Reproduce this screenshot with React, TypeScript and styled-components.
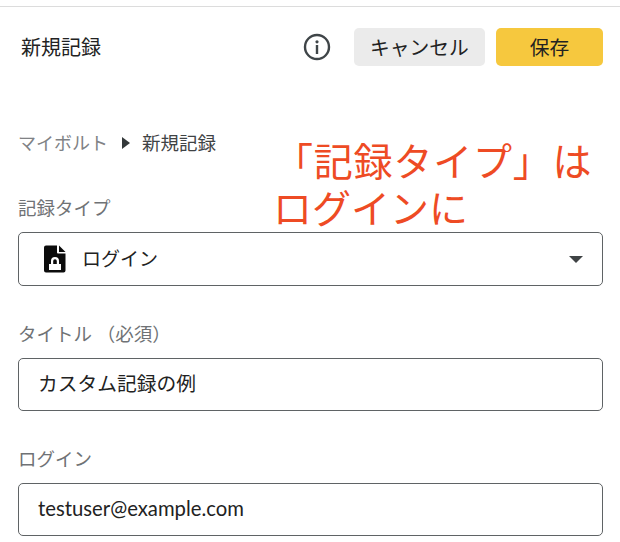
import React from 'react';
import styled, { createGlobalStyle } from 'styled-components';

const GlobalStyle = createGlobalStyle`
    html, body {
        margin: 0;
        background: #fff;
        overflow: hidden;
    }
    * {
        box-sizing: border-box;
    }
`;

const Page = styled.div`
    position: relative;
    width: 620px;
    height: 542px;
    overflow: hidden;
    padding-top: 6px;
    font-family: Lato, "Noto Sans CJK JP", sans-serif;
    color: #222;
`;

const TopLine = styled.div`
    height: 1px;
    background: #dcdcdc;
`;

const Toolbar = styled.header`
    display: flex;
    align-items: center;
    height: 38px;
    margin-top: 21px;
    padding: 0 17px 0 21px;
`;

const Title = styled.h1`
    flex: 1;
    margin: 0;
    font-size: 20px;
    font-weight: 400;
    line-height: 38px;
`;

const InfoButton = styled.span`
    display: flex;
    width: 28px;
    height: 28px;
    margin-right: 23px;
`;

const ActionButton = styled.button<{ $primary?: boolean; $width: number }>`
    width: ${(p) => p.$width}px;
    height: 38px;
    margin-left: ${(p) => (p.$primary ? 11 : 0)}px;
    padding: 0 0 2px;
    border: none;
    border-radius: 5px;
    background: ${(p) => (p.$primary ? '#f6c83e' : '#ebebeb')};
    color: #222;
    font-family: inherit;
    font-size: 19.750px;
`;

const Content = styled.main`
    padding: 0 17px 0 18px;
`;

const Breadcrumb = styled.nav`
    display: flex;
    align-items: center;
    height: 28px;
    margin-top: 62px;
    font-size: 18px;
`;

const CrumbLink = styled.span`
    color: #808285;
`;

const CrumbCurrent = styled.span`
    color: #3f4345;
    font-size: 18.500px;
`;

const CrumbArrow = styled.span`
    width: 0;
    height: 0;
    margin: 2px 12px 0 14px;
    border-top: 6px solid transparent;
    border-bottom: 6px solid transparent;
    border-left: 8px solid #33383a;
`;

const Field = styled.div<{ $gap: number }>`
    margin-top: ${(p) => p.$gap}px;
`;

const Label = styled.label`
    display: block;
    height: 26px;
    color: #6f7275;
    font-size: 18.500px;
    line-height: 26px;
`;

const Box = styled.div<{ $height: number; $inset: number }>`
    display: flex;
    align-items: center;
    height: ${(p) => p.$height}px;
    margin-top: 11px;
    padding: 0 19px 0 ${(p) => p.$inset}px;
    border: 1px solid #5f6365;
    border-radius: 5px;
    font-size: 19.750px;
`;

const BoxText = styled.span<{ $latin?: boolean }>`
    padding-bottom: 4px;
    font-size: ${(p) => (p.$latin ? 20.3 : 19.75)}px;
`;

const SelectText = styled.span`
    flex: 1;
    margin-left: 16px;
    padding-bottom: 4px;
    font-size: 19px;
`;

const Caret = styled.span`
    width: 0;
    height: 0;
    border-left: 7px solid transparent;
    border-right: 7px solid transparent;
    border-top: 7px solid #3f4345;
`;

const Note = styled.div`
    position: absolute;
    left: 273px;
    top: 138px;
    width: 340px;
    color: #ee4b24;
    font-size: 39px;
    line-height: 47px;
    white-space: nowrap;
`;

const NoteWide = styled.div`
    margin-left: 1px;
    letter-spacing: 0.800px;
`;

const InfoIcon = () => (
	<svg width="28" height="28" viewBox="0 0 28 28" fill="none">
		<circle cx="14" cy="14" r="12" stroke="#3f4548" strokeWidth="2.4" />
		<circle cx="14" cy="8.800" r="1.600" fill="#3f4548" />
		<rect x="12.800" y="12" width="2.400" height="9" fill="#3f4548" />
	</svg>
);

const LockFileIcon = () => (
	<svg width="22" height="28" viewBox="0 0 22 28">
		<path
			fillRule="evenodd"
			d="M2 0.500h11v7a1 1 0 0 0 1 1h7.500v17a2 2 0 0 1-2 2H2a2 2 0 0 1-2-2V2.500a2 2 0 0 1 2-2zM7 16v3H5v6h12v-6h-2v-3a4 4 0 0 0-8 0zM9.200 19v-3a1.800 1.800 0 0 1 3.600 0v3z"
			fill="#0c0c0c"
		/>
		<path d="M15 0.500l6.500 6.500h-6.500z" fill="#0c0c0c" />
	</svg>
);

const App: React.FC = () => {
	return (
		<Page>
			<GlobalStyle />
			<TopLine />
			<Toolbar>
				<Title>新規記録</Title>
				<InfoButton>
					<InfoIcon />
				</InfoButton>
				<ActionButton $width={131}>キャンセル</ActionButton>
				<ActionButton $primary $width={107}>保存</ActionButton>
			</Toolbar>
			<Content>
				<Breadcrumb>
					<CrumbLink>マイボルト</CrumbLink>
					<CrumbArrow />
					<CrumbCurrent>新規記録</CrumbCurrent>
				</Breadcrumb>
				<Field $gap={39}>
					<Label>記録タイプ</Label>
					<Box $height={54} $inset={25}>
						<LockFileIcon />
						<SelectText>ログイン</SelectText>
						<Caret />
					</Box>
				</Field>
				<Field $gap={35}>
					<Label>タイトル （必須）</Label>
					<Box $height={53} $inset={19}>
						<BoxText>カスタム記録の例</BoxText>
					</Box>
				</Field>
				<Field $gap={35}>
					<Label>ログイン</Label>
					<Box $height={53} $inset={19}>
						<BoxText $latin>testuser@example.com</BoxText>
					</Box>
				</Field>
			</Content>
			<Note>
				<NoteWide>「記録タイプ」は</NoteWide>
				ログインに
			</Note>
		</Page>
	);
};

export default App;
